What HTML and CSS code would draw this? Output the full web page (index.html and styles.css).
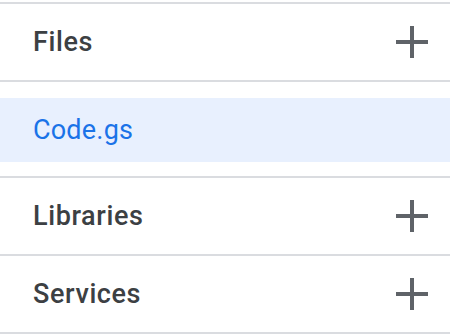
FILE: index.html
```html
<!DOCTYPE html>
<html>
<head>
<meta charset="utf-8">
<link rel="stylesheet" href="styles.css">
</head>
<body>
<div class="panel">
  <div class="section">
    <div class="header">
      <span class="title">Files</span>
      <svg class="plus" viewBox="0 0 32 32" width="32" height="32"><rect x="0" y="14" width="32" height="4"/><rect x="14" y="0" width="4" height="32"/></svg>
    </div>
  </div>
  <div class="section files">
    <div class="file active">Code.gs</div>
  </div>
  <div class="section">
    <div class="header">
      <span class="title">Libraries</span>
      <svg class="plus" viewBox="0 0 32 32" width="32" height="32"><rect x="0" y="14" width="32" height="4"/><rect x="14" y="0" width="4" height="32"/></svg>
    </div>
  </div>
  <div class="section">
    <div class="header">
      <span class="title">Services</span>
      <svg class="plus" viewBox="0 0 32 32" width="32" height="32"><rect x="0" y="14" width="32" height="4"/><rect x="14" y="0" width="4" height="32"/></svg>
    </div>
  </div>
</div>
</body>
</html>
```
FILE: styles.css
```css
html, body {
  margin: 0;
  padding: 0;
  background: #ffffff;
}
body {
  font-family: Roboto, "Noto Sans", "Liberation Sans", sans-serif;
  width: 450px;
  height: 334px;
  overflow: hidden;
}
.panel {
  padding-top: 2px;
  display: flex;
  flex-direction: column;
}
.section {
  border-top: 2px solid #dadce0;
}
.section:last-child {
  border-bottom: 2px solid #dadce0;
}
.header {
  height: 76px;
  display: flex;
  align-items: center;
  justify-content: space-between;
  padding: 0 22px 0 33px;
}
.title {
  font-size: 27px;
  font-weight: 500;
  color: #3c4043;
  letter-spacing: 0.6px;
}
.plus {
  fill: #5f6368;
  display: block;
}
.files {
  padding: 16px 0 14px;
}
.file {
  height: 64px;
  display: flex;
  align-items: center;
  padding-left: 33px;
  font-size: 27px;
  color: #1a73e8;
  letter-spacing: 0.2px;
}
.file.active {
  background: #e8f0fe;
}
```
